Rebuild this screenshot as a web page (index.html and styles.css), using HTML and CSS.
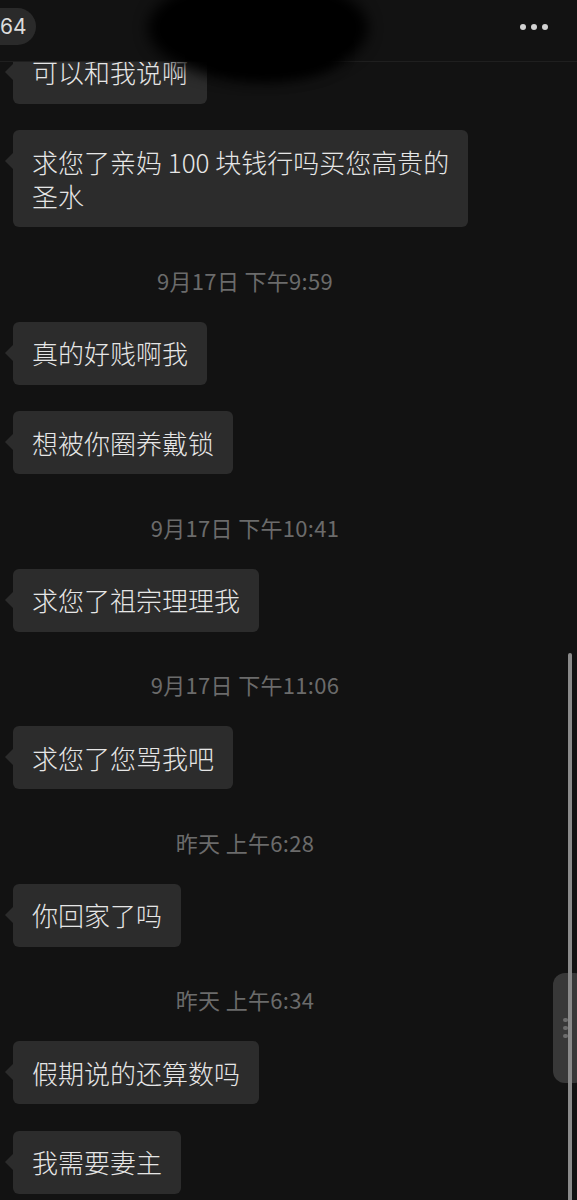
FILE: index.html
```html
<!DOCTYPE html>
<html lang="zh-CN">
<head>
<meta charset="utf-8">
<title>Chat</title>
<link rel="stylesheet" href="styles.css">
</head>
<body>
<div class="screen">
  <div class="chat">
    <div class="msg">可以和我说啊</div>
    <div class="msg">求您了亲妈 100 块钱行吗买您高贵的<br>圣水</div>
    <div class="time">9月17日 下午9:59</div>
    <div class="msg">真的好贱啊我</div>
    <div class="msg">想被你圈养戴锁</div>
    <div class="time">9月17日 下午10:41</div>
    <div class="msg">求您了祖宗理理我</div>
    <div class="time">9月17日 下午11:06</div>
    <div class="msg">求您了您骂我吧</div>
    <div class="time">昨天 上午6:28</div>
    <div class="msg">你回家了吗</div>
    <div class="time">昨天 上午6:34</div>
    <div class="msg">假期说的还算数吗</div>
    <div class="msg">我需要妻主</div>
  </div>

  <header class="header">
    <div class="badge">64</div>
    <div class="more"><span></span><span></span><span></span></div>
  </header>
  <div class="redact"></div>
  <div class="redact redact-b"></div>

  <div class="scroll-handle"><i></i><i></i><i></i></div>
  <div class="scroll-line"></div>
</div>
</body>
</html>
```

FILE: styles.css
```css
* { box-sizing: border-box; }

html, body {
  margin: 0;
  padding: 0;
  background: #121212;
}

.screen {
  position: relative;
  width: 577px;
  height: 1200px;
  overflow: hidden;
  background: #121212;
  font-family: "Noto Sans CJK SC", "Noto Sans", sans-serif;
}

.chat {
  padding: 40.5px 0 0 13px;
}

.msg {
  position: relative;
  width: fit-content;
  margin: 0 0 26.5px 0;
  padding: 14.5px 19px;
  background: #2c2c2c;
  border-radius: 6px;
  color: #e6e6e6;
  font-size: 26px;
  font-weight: 300;
  line-height: 34px;
}

.msg::before {
  content: "";
  position: absolute;
  left: -8px;
  top: 23px;
  border-right: 8px solid #2c2c2c;
  border-top: 8px solid transparent;
  border-bottom: 8px solid transparent;
}

.time {
  margin: 41.5px 0 31px 0;
  padding-right: 100px;
  text-align: center;
  color: #6b6b6b;
  font-size: 22px;
  letter-spacing: 0.3px;
  line-height: 22px;
}

.header {
  position: absolute;
  top: 0;
  left: 0;
  right: 0;
  height: 62px;
  padding-top: 8px;
  background: #121212;
  border-bottom: 1px solid #1f1f1f;
  display: flex;
  align-items: flex-start;
  justify-content: space-between;
  z-index: 2;
}

.badge {
  margin-left: -20px;
  height: 37px;
  padding: 0 9px 0 20px;
  border-radius: 18.5px;
  background: #2a2a2a;
  color: #dcdcdc;
  font-family: "Inter", "Noto Sans", sans-serif;
  font-size: 21px;
  line-height: 37px;
}

.more {
  display: flex;
  gap: 5px;
  height: 37px;
  align-items: center;
  padding-right: 29px;
}

.more span {
  width: 6px;
  height: 6px;
  border-radius: 50%;
  background: #d2d2d2;
}

.redact {
  position: absolute;
  left: 148px;
  top: -24px;
  width: 220px;
  height: 104px;
  border-radius: 50%;
  background: #000;
  filter: blur(7px);
  z-index: 3;
}

.redact-b {
  left: 200px;
  top: 28px;
  width: 140px;
  height: 50px;
}

.scroll-line {
  position: absolute;
  left: 568px;
  top: 653px;
  width: 4px;
  height: 560px;
  border-radius: 2px;
  background: #8a8a8a;
  z-index: 5;
}

.scroll-handle {
  position: absolute;
  left: 553px;
  top: 973px;
  width: 34px;
  height: 110px;
  border-radius: 12px;
  background: #383838;
  display: flex;
  flex-direction: column;
  justify-content: center;
  gap: 3.5px;
  padding-left: 10px;
  z-index: 4;
}

.scroll-handle i {
  display: block;
  width: 4.5px;
  height: 4.5px;
  border-radius: 50%;
  background: #6c6c6c;
}
```
